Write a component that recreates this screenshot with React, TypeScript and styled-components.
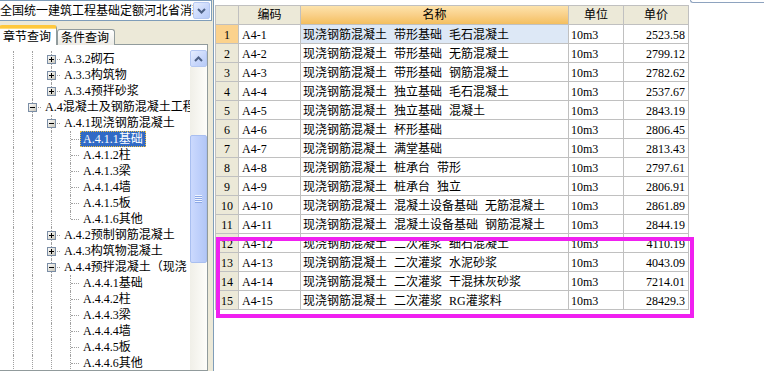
import React from "react";
import styled, { createGlobalStyle, css } from "styled-components";

const GlobalStyle = createGlobalStyle`
  html, body {
    margin: 0;
    padding: 0;
    background: #ffffff;
  }
  body {
    font-family: "Liberation Serif", "Noto Sans CJK SC", serif;
    font-size: 12px;
    color: #000000;
  }
`;

const Screen = styled.div`
  display: flex;
  width: 764px;
  height: 371px;
  overflow: hidden;
  background: #ece9d8;
`;

/* ---------- left pane ---------- */

const LeftPane = styled.div`
  flex: none;
  width: 213px;
  display: flex;
  flex-direction: column;
  overflow: hidden;
`;

const Combo = styled.div`
  flex: none;
  display: flex;
  align-items: center;
  box-sizing: border-box;
  width: 214px;
  height: 21px;
  margin-left: -2px;
  padding: 0 1px 0 1px;
  border: 1px solid #7f9db9;
  background: #ffffff;
`;

const ComboText = styled.div`
  flex: 1;
  overflow: hidden;
  white-space: nowrap;
  line-height: 20px;
`;

const BlueButton = styled.div`
  flex: none;
  display: flex;
  align-items: center;
  justify-content: center;
  box-sizing: border-box;
  width: 17px;
  height: 17px;
  border: 1px solid #b5c8f2;
  border-radius: 2px;
  background: linear-gradient(135deg, #e6eefe 0%, #c7d6fb 60%, #b7cbf7 100%);
`;

const TabStrip = styled.div`
  flex: none;
  display: flex;
  align-items: flex-end;
  height: 20px;
  margin-top: 4px;
  margin-bottom: -1px;
  position: relative;
  z-index: 1;
`;

const Tab = styled.div<{ $active?: boolean }>`
  box-sizing: border-box;
  width: 58px;
  border: 1px solid #919b9c;
  border-bottom: none;
  border-radius: 3px 3px 0 0;
  white-space: nowrap;
  ${(p) =>
    p.$active
      ? css`
          height: 20px;
          margin-left: -1px;
          padding-left: 3px;
          line-height: 18px;
          background: #ffffff;
          border-top: 3px solid #ffc83c;
          box-shadow: inset 0 1px 0 #ffdc78;
        `
      : css`
          height: 16px;
          padding-left: 3px;
          line-height: 16px;
          background: linear-gradient(to bottom, #ffffff, #ecebe5);
        `}
`;

const TreeBox = styled.div`
  flex: 1;
  display: flex;
  box-sizing: border-box;
  width: 209px;
  margin-left: -1px;
  padding-top: 5px;
  border: 1px solid #919b9c;
  background: #ffffff;
  min-height: 0;
`;

const TreeView = styled.div`
  flex: 1;
  overflow: hidden;
  padding: 1px 0 0 3px;
`;

const TreeRow = styled.div`
  display: flex;
  align-items: center;
  height: 16px;
  white-space: nowrap;
`;

const Guide = styled.span<{ $line?: boolean }>`
  position: relative;
  flex: none;
  width: 19px;
  height: 16px;
  ${(p) =>
    p.$line &&
    css`
      &::before {
        content: "";
        position: absolute;
        left: 10px;
        top: 0;
        height: 16px;
        border-left: 1px dotted #a0a0a0;
      }
    `}
`;

const Joint = styled.span<{ $last?: boolean }>`
  position: relative;
  flex: none;
  width: 19px;
  height: 16px;
  &::before {
    content: "";
    position: absolute;
    left: 10px;
    top: 0;
    height: ${(p) => (p.$last ? "8px" : "16px")};
    border-left: 1px dotted #a0a0a0;
  }
  &::after {
    content: "";
    position: absolute;
    left: 11px;
    right: 0;
    top: 8px;
    border-top: 1px dotted #a0a0a0;
  }
`;

const Expander = styled.svg`
  position: absolute;
  left: 6px;
  top: 4px;
  z-index: 1;
`;

const Label = styled.span<{ $selected?: boolean }>`
  margin-left: 1px;
  padding: 0 2px;
  line-height: 14px;
  border: 1px solid transparent;
  ${(p) =>
    p.$selected &&
    css`
      background: #316ac5;
      color: #ffffff;
      border: 1px dotted #f0c040;
    `}
`;

const ScrollBar = styled.div`
  flex: none;
  display: flex;
  flex-direction: column;
  width: 17px;
`;

const Track = styled.div`
  flex: 1;
  padding-top: 68px;
  background: linear-gradient(to right, #f0efe8, #fdfdfa);
`;

const Thumb = styled.div`
  display: flex;
  align-items: center;
  justify-content: center;
  box-sizing: border-box;
  height: 128px;
  border: 1px solid #a9bff0;
  border-radius: 2px;
  background: linear-gradient(to right, #cbd9fd, #bccefa 60%, #b3c7f6);
`;

const Grip = styled.div`
  width: 7px;
  height: 8px;
  background: repeating-linear-gradient(
    to bottom,
    #eef3fe 0 1px,
    #8ca8e6 1px 2px
  );
`;

/* ---------- grid pane ---------- */

const GridPane = styled.div`
  flex: 1;
  position: relative;
  display: flex;
  flex-direction: column;
  align-items: flex-start;
  border-left: 1px solid #7f9db9;
  background: #ffffff;
`;

const TopStrip = styled.div`
  align-self: stretch;
  display: flex;
  justify-content: flex-end;
  height: 5px;
`;

const TopBox = styled.div`
  width: 73px;
  height: 2px;
  border: 1px solid #8ea3bf;
  border-top: none;
  border-right: none;
  border-radius: 0 0 0 3px;
`;

const Table = styled.div`
  display: grid;
  grid-template-columns: 23px 62px 268px 55px 65px;
  margin-left: 1px;
  border-left: 1px solid #c0c0c0;
  border-top: 1px solid #c0c0c0;
`;

const Cell = styled.div<{ $align?: "left" | "right" | "center"; $pad?: number }>`
  box-sizing: border-box;
  height: 19px;
  line-height: 20px;
  border-right: 1px solid #c0c0c0;
  border-bottom: 1px solid #c0c0c0;
  white-space: nowrap;
  overflow: hidden;
  word-spacing: 4px;
  text-align: ${(p) => p.$align ?? "left"};
  padding: 0 ${(p) => (p.$align === "right" ? p.$pad ?? 3 : 0)}px 0
    ${(p) => (p.$align === "left" || !p.$align ? p.$pad ?? 3 : 0)}px;
`;

const HeadCell = styled(Cell)<{ $hot?: boolean }>`
  text-align: center;
  padding: 0;
  line-height: 19px;
  background: ${(p) =>
    p.$hot
      ? "linear-gradient(to bottom, #fde3ac, #f9d089 50%, #f4bf5f)"
      : "#ece9d8"};
`;

const RowHead = styled(Cell)<{ $selected?: boolean }>`
  text-align: center;
  padding: 0;
  background: ${(p) => (p.$selected ? "#fbd28d" : "#ece9d8")};
`;

const NameCell = styled(Cell)<{ $focus?: boolean }>`
  background: ${(p) => (p.$focus ? "#dde8f6" : "transparent")};
`;

const Highlight = styled.div`
  position: absolute;
  left: 2px;
  top: 237px;
  box-sizing: border-box;
  width: 478px;
  height: 81px;
  border: 4px solid #f020f0;
  pointer-events: none;
`;

/* ---------- data ---------- */

type Node = {
  level: number;
  text: string;
  guides: boolean[];
  last?: boolean;
  exp?: "plus" | "minus";
  selected?: boolean;
};

const g3 = [true, true, true];
const g2 = [true, true];

const tree: Node[] = [
  { level: 2, text: "A.3.2砌石", guides: g2, exp: "plus" },
  { level: 2, text: "A.3.3构筑物", guides: g2, exp: "plus" },
  { level: 2, text: "A.3.4预拌砂浆", guides: g2, exp: "plus", last: true },
  { level: 1, text: "A.4混凝土及钢筋混凝土工程", guides: [true], exp: "minus" },
  { level: 2, text: "A.4.1现浇钢筋混凝土", guides: g2, exp: "minus" },
  { level: 3, text: "A.4.1.1基础", guides: g3, selected: true },
  { level: 3, text: "A.4.1.2柱", guides: g3 },
  { level: 3, text: "A.4.1.3梁", guides: g3 },
  { level: 3, text: "A.4.1.4墙", guides: g3 },
  { level: 3, text: "A.4.1.5板", guides: g3 },
  { level: 3, text: "A.4.1.6其他", guides: g3, last: true },
  { level: 2, text: "A.4.2预制钢筋混凝土", guides: g2, exp: "plus" },
  { level: 2, text: "A.4.3构筑物混凝土", guides: g2, exp: "plus" },
  { level: 2, text: "A.4.4预拌混凝土（现浇", guides: g2, exp: "minus" },
  { level: 3, text: "A.4.4.1基础", guides: g3 },
  { level: 3, text: "A.4.4.2柱", guides: g3 },
  { level: 3, text: "A.4.4.3梁", guides: g3 },
  { level: 3, text: "A.4.4.4墙", guides: g3 },
  { level: 3, text: "A.4.4.5板", guides: g3 },
  { level: 3, text: "A.4.4.6其他", guides: g3 },
];

const rows: [string, string, string][] = [
  ["A4-1", "现浇钢筋混凝土 带形基础 毛石混凝土", "2523.58"],
  ["A4-2", "现浇钢筋混凝土 带形基础 无筋混凝土", "2799.12"],
  ["A4-3", "现浇钢筋混凝土 带形基础 钢筋混凝土", "2782.62"],
  ["A4-4", "现浇钢筋混凝土 独立基础 毛石混凝土", "2537.67"],
  ["A4-5", "现浇钢筋混凝土 独立基础 混凝土", "2843.19"],
  ["A4-6", "现浇钢筋混凝土 杯形基础", "2806.45"],
  ["A4-7", "现浇钢筋混凝土 满堂基础", "2813.43"],
  ["A4-8", "现浇钢筋混凝土 桩承台 带形", "2797.61"],
  ["A4-9", "现浇钢筋混凝土 桩承台 独立", "2806.91"],
  ["A4-10", "现浇钢筋混凝土 混凝土设备基础 无筋混凝土", "2861.89"],
  ["A4-11", "现浇钢筋混凝土 混凝土设备基础 钢筋混凝土", "2844.19"],
  ["A4-12", "现浇钢筋混凝土 二次灌浆 细石混凝土", "4110.19"],
  ["A4-13", "现浇钢筋混凝土 二次灌浆 水泥砂浆", "4043.09"],
  ["A4-14", "现浇钢筋混凝土 二次灌浆 干混抹灰砂浆", "7214.01"],
  ["A4-15", "现浇钢筋混凝土 二次灌浆 RG灌浆料", "28429.3"],
];

/* ---------- icons ---------- */

const Chevron: React.FC<{ up?: boolean }> = ({ up }) => (
  <svg width="9" height="6" viewBox="0 0 9 6">
    <polyline
      points={up ? "1,5 4.5,1.5 8,5" : "1,1 4.5,4.5 8,1"}
      fill="none"
      stroke="#4d6185"
      strokeWidth="2"
    />
  </svg>
);

const ExpanderIcon: React.FC<{ kind: "plus" | "minus" }> = ({ kind }) => (
  <Expander width="9" height="9" viewBox="0 0 9 9">
    <defs>
      <linearGradient id="expfill" x1="0" y1="0" x2="1" y2="1">
        <stop offset="0" stopColor="#ffffff" />
        <stop offset="1" stopColor="#c6c3b6" />
      </linearGradient>
    </defs>
    <rect x="0.5" y="0.5" width="8" height="8" fill="url(#expfill)" stroke="#7b8ea6" />
    <line x1="2" y1="4.5" x2="7" y2="4.5" stroke="#000" />
    {kind === "plus" && <line x1="4.5" y1="2" x2="4.5" y2="7" stroke="#000" />}
  </Expander>
);

/* ---------- app ---------- */

export default function App() {
  return (
    <>
      <GlobalStyle />
      <Screen>
        <LeftPane>
          <Combo>
            <ComboText>全国统一建筑工程基础定额河北省消耗量定额</ComboText>
            <BlueButton>
              <Chevron />
            </BlueButton>
          </Combo>
          <TabStrip>
            <Tab $active>章节查询</Tab>
            <Tab>条件查询</Tab>
          </TabStrip>
          <TreeBox>
            <TreeView>
              {tree.map((n) => (
                <TreeRow key={n.text}>
                  {n.guides.slice(0, n.level).map((on, i) => (
                    <Guide key={i} $line={on} />
                  ))}
                  <Joint $last={n.last}>{n.exp && <ExpanderIcon kind={n.exp} />}</Joint>
                  <Label $selected={n.selected}>{n.text}</Label>
                </TreeRow>
              ))}
            </TreeView>
            <ScrollBar>
              <BlueButton>
                <Chevron up />
              </BlueButton>
              <Track>
                <Thumb>
                  <Grip />
                </Thumb>
              </Track>
            </ScrollBar>
          </TreeBox>
        </LeftPane>

        <GridPane>
          <TopStrip>
            <TopBox />
          </TopStrip>
          <Table>
            <HeadCell />
            <HeadCell>编码</HeadCell>
            <HeadCell $hot>名称</HeadCell>
            <HeadCell>单位</HeadCell>
            <HeadCell>单价</HeadCell>
            {rows.map(([code, name, price], i) => (
              <React.Fragment key={code}>
                <RowHead $selected={i === 0}>{i + 1}</RowHead>
                <Cell $pad={3}>{code}</Cell>
                <NameCell $pad={2} $focus={i === 0}>
                  {name}
                </NameCell>
                <Cell $pad={2}>10m3</Cell>
                <Cell $align="right" $pad={3}>
                  {price}
                </Cell>
              </React.Fragment>
            ))}
          </Table>
          <Highlight />
        </GridPane>
      </Screen>
    </>
  );
}
